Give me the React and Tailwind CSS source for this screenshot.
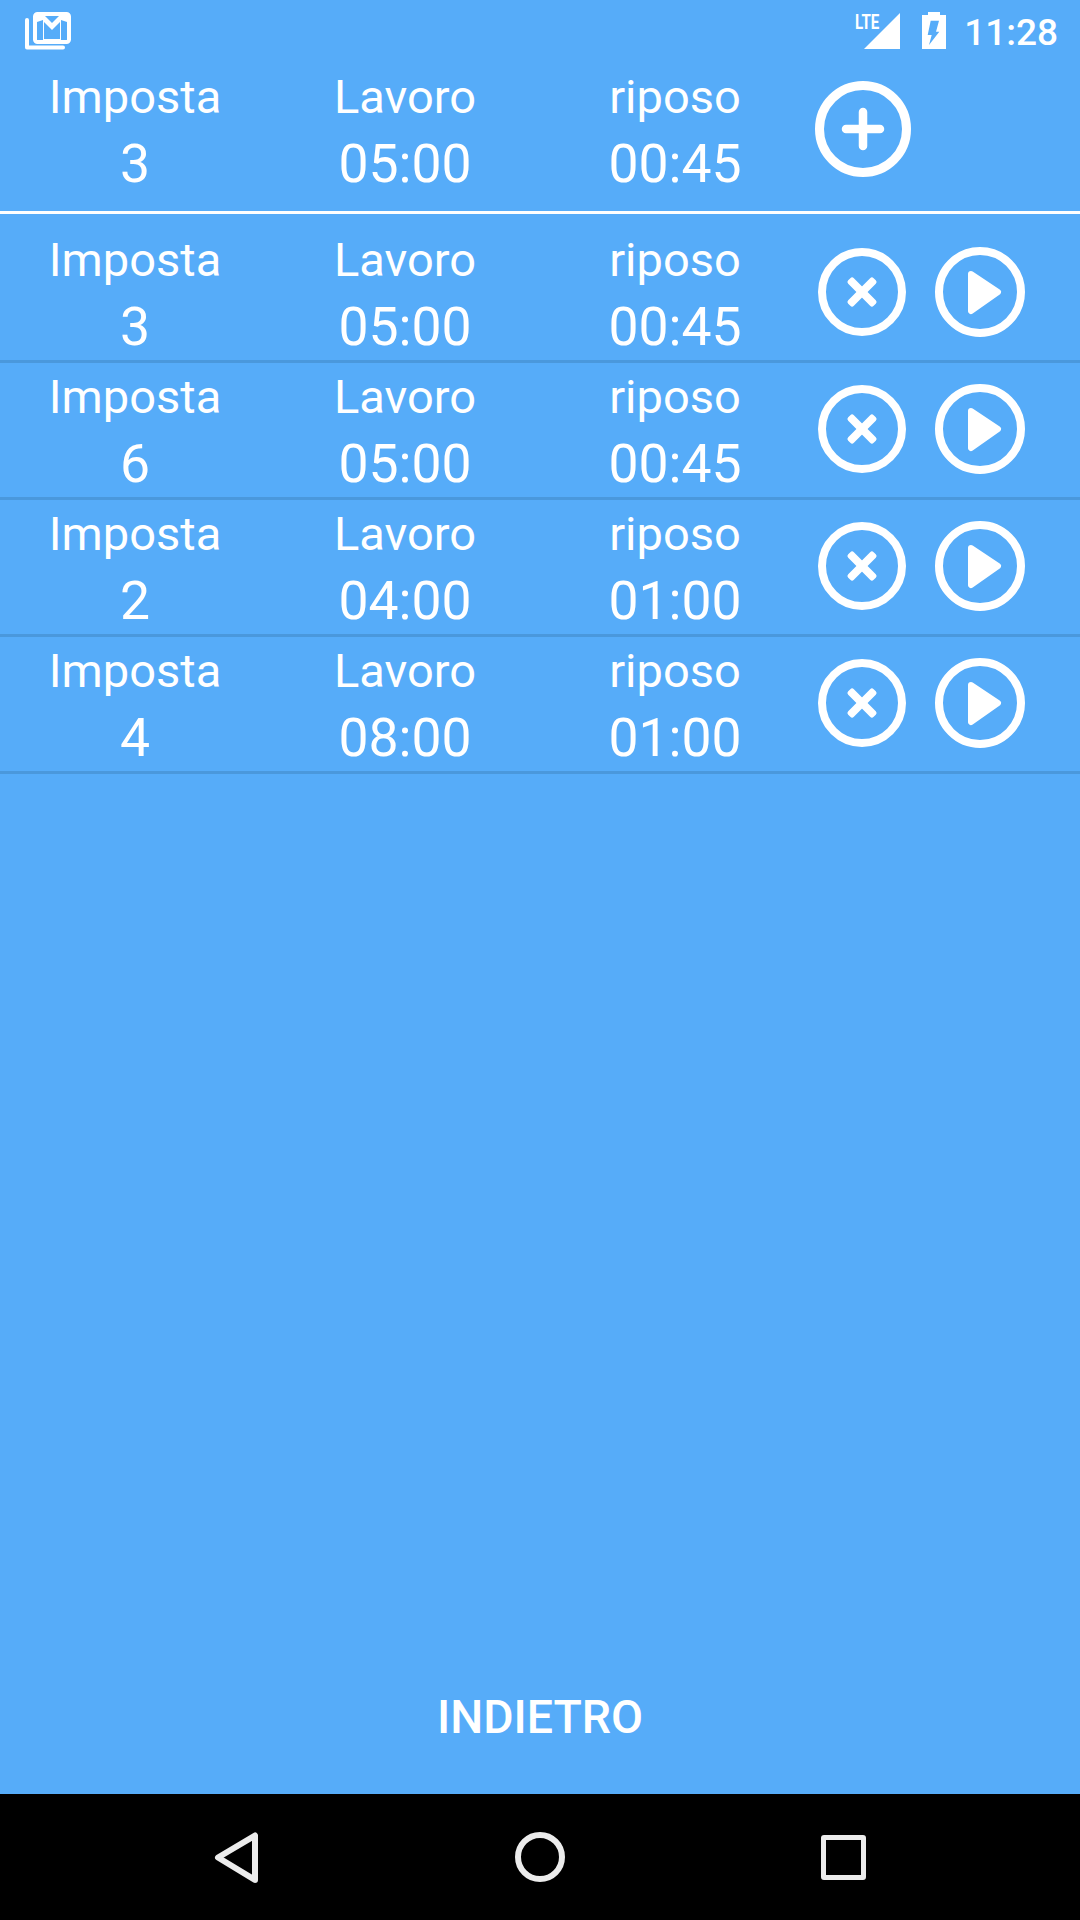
import React from 'react';

const rows = [
  { sets: 3, work: '05:00', rest: '00:45' },
  { sets: 6, work: '05:00', rest: '00:45' },
  { sets: 2, work: '04:00', rest: '01:00' },
  { sets: 4, work: '08:00', rest: '01:00' },
];

const Stat = ({ label, value }) => (
  <div className="w-[270px] pt-[5px] flex flex-col items-center text-white">
    <span className="text-[47px] leading-[58px] h-[58px]">{label}</span>
    <span className="text-[53.5px] leading-[64px] h-[64px] mt-[6px]">{value}</span>
  </div>
);

const StatGroup = ({ sets, work, rest }) => (
  <>
    <Stat label="Imposta" value={sets} />
    <Stat label="Lavoro" value={work} />
    <Stat label="riposo" value={rest} />
  </>
);

const PlusIcon = () => (
  <svg width="96" height="96" viewBox="0 0 96 96" fill="none" stroke="white" strokeLinecap="round">
    <circle cx="48" cy="48" r="43.5" strokeWidth="9" />
    <path d="M48 31V65M31 48H65" strokeWidth="8.5" />
  </svg>
);

const CloseIcon = () => (
  <svg width="88" height="88" viewBox="0 0 88 88" fill="none">
    <circle cx="44" cy="44" r="40" stroke="white" strokeWidth="8" />
    <rect x="26" y="40" width="36" height="8" rx="2.5" fill="white" transform="rotate(45 44 44)" />
    <rect x="26" y="40" width="36" height="8" rx="2.5" fill="white" transform="rotate(-45 44 44)" />
  </svg>
);

const PlayIcon = () => (
  <svg width="90" height="90" viewBox="0 0 90 90" fill="none">
    <circle cx="45" cy="45" r="41" stroke="white" strokeWidth="8" />
    <path d="M36 27L63 45L36 64Z" fill="white" stroke="white" strokeWidth="6" strokeLinejoin="round" />
  </svg>
);

const StatusBar = () => (
  <div className="h-[63px] flex items-start justify-between pl-[25px] pr-[22px] text-white">
    <svg className="mt-[12px]" width="46" height="39" viewBox="0 0 46 39" fill="none">
      <path d="M2 8V35.5H38" stroke="white" strokeWidth="4" strokeLinecap="round" strokeLinejoin="round" />
      <rect x="10" y="2" width="34" height="28" rx="2.5" stroke="white" strokeWidth="4" />
      <path d="M12 3H19L27 11L35 3H42V10L36 8V29H42H12V29H18V8L12 10Z" fill="white" />
      <path d="M19 10L27 18L35 10V27H19Z" fill="#56ACF9" />
    </svg>
    <div className="flex items-start">
      <div className="relative w-[45px] h-[36px] mt-[13px]">
        <svg className="absolute right-0 top-0" width="36" height="36" viewBox="0 0 36 36">
          <path d="M36 0V36H0Z" fill="white" />
        </svg>
        <span className="absolute left-0 top-0 text-[21px] leading-[18px] font-bold origin-top-left scale-x-[0.72] font-['Roboto',sans-serif]">
          LTE
        </span>
      </div>
      <svg className="ml-[22px] mt-[12px]" width="24" height="37" viewBox="0 0 24 37">
        <path d="M0 3H6V0H18V3H24V37H0Z" fill="white" />
        <path d="M8.7 8.7H17L14 19.7H17.3L7 33L9.7 23H5.7Z" fill="#56ACF9" />
      </svg>
      <span className="ml-[18px] mt-[11px] text-[37px] leading-[44px] font-medium">11:28</span>
    </div>
  </div>
);

const NavBar = () => (
  <div className="h-[126px] bg-black flex items-start pt-[38px]">
    <svg className="ml-[214px]" width="46" height="52" viewBox="0 0 46 52" fill="none">
      <path d="M41 3.5V48L4 25.5Z" stroke="#ececec" strokeWidth="6" strokeLinejoin="round" />
    </svg>
    <svg className="ml-[255px]" width="50" height="50" viewBox="0 0 50 50" fill="none">
      <circle cx="25" cy="25" r="22" stroke="#ececec" strokeWidth="6" />
    </svg>
    <div className="ml-[256px] mt-[3px] w-[45px] h-[45px] border-[5px] border-[#ececec] rounded-[3px]" />
  </div>
);

export default function App() {
  return (
    <div className="w-[1080px] h-[1920px] flex flex-col bg-[#56ACF9] font-['Roboto',sans-serif]">
      <StatusBar />

      {/* Add new timer */}
      <div className="h-[151px] border-b-[3px] border-white flex items-start">
        <StatGroup sets={3} work="05:00" rest="00:45" />
        <div className="ml-[5px] mt-[18px]">
          <PlusIcon />
        </div>
      </div>

      {/* Saved timers */}
      <div className="mt-[12px] flex flex-col">
        {rows.map((row, i) => (
          <div key={i} className="h-[137px] border-b-[3px] border-[#4A98DC] flex items-start">
            <StatGroup {...row} />
            <div className="ml-[8px] mt-[21px] flex items-center gap-[29px]">
              <CloseIcon />
              <PlayIcon />
            </div>
          </div>
        ))}
      </div>

      <div className="mt-auto h-[131px] flex justify-center pt-[29px]">
        <span className="text-[46.5px] leading-[50px] font-medium text-white uppercase">Indietro</span>
      </div>

      <NavBar />
    </div>
  );
}
